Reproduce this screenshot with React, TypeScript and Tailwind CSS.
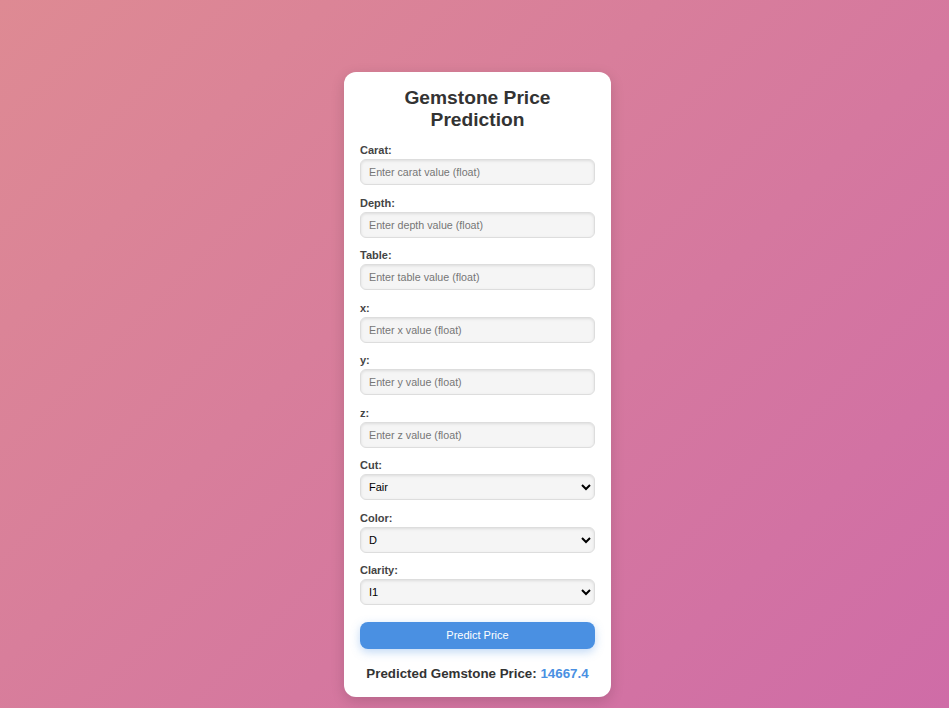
import React, { useState } from "react";

const fields = [
  { label: "Carat:", ph: "Enter carat value (float)" },
  { label: "Depth:", ph: "Enter depth value (float)" },
  { label: "Table:", ph: "Enter table value (float)" },
  { label: "x:", ph: "Enter x value (float)" },
  { label: "y:", ph: "Enter y value (float)" },
  { label: "z:", ph: "Enter z value (float)" },
];

const selects = [
  { label: "Cut:", options: ["Fair", "Good", "Very Good", "Premium", "Ideal"] },
  { label: "Color:", options: ["D", "E", "F", "G", "H", "I", "J"] },
  { label: "Clarity:", options: ["I1", "SI2", "SI1", "VS2", "VS1", "VVS2", "VVS1", "IF"] },
];

export default function App() {
  const [price] = useState("14667.4");

  return (
    <div className="min-h-screen w-full flex justify-center pl-[6px] pt-[72px] bg-[linear-gradient(135deg,#de8a93_0%,#cf6ca7_100%)] font-['Liberation_Sans',Arial,sans-serif]">
      <div className="w-[267px] h-[625px] bg-white rounded-xl shadow-[0_4px_14px_rgba(0,0,0,0.15)] px-4 pt-[15px]">
        <h2 className="text-center text-[19.2px] leading-[22px] font-bold text-[#333] mb-[12px]">
          Gemstone Price
          <br />
          Prediction
        </h2>
        <form className="flex flex-col" onSubmit={(e) => e.preventDefault()}>
          {fields.map((f) => (
            <div key={f.label} className="flex flex-col mb-[10.5px]">
              <label className="text-[11px] leading-[14px] font-bold text-[#444] mb-[2px]">{f.label}</label>
              <input
                type="text"
                placeholder={f.ph}
                className="h-[26px] w-full rounded-md border border-[#ddd] bg-[#f5f5f5] px-2 text-[10.7px] text-[#333] placeholder:text-[#757575] shadow-[inset_0_1px_3px_rgba(0,0,0,0.1)] outline-none"
              />
            </div>
          ))}
          {selects.map((s) => (
            <div key={s.label} className="flex flex-col mb-[10.5px]">
              <label className="text-[11px] leading-[14px] font-bold text-[#444] mb-[2px]">{s.label}</label>
              <select className="h-[26px] w-full rounded-md border border-[#ddd] bg-[#f5f5f5] px-1 text-[11px] text-black shadow-[inset_0_1px_3px_rgba(0,0,0,0.1)] outline-none">
                {s.options.map((o) => (
                  <option key={o}>{o}</option>
                ))}
              </select>
            </div>
          ))}
          <button
            type="submit"
            className="mt-[6px] h-[27px] w-full rounded-lg bg-[#4a90e2] text-[11px] text-white shadow-[0_3px_10px_rgba(74,144,226,0.35)]"
          >
            Predict Price
          </button>
        </form>
        <p className="mt-[15px] text-center text-[13.33px] leading-5 font-bold text-[#333]">
          Predicted Gemstone Price: <span className="text-[#4a90e2]">{price}</span>
        </p>
      </div>
    </div>
  );
}
